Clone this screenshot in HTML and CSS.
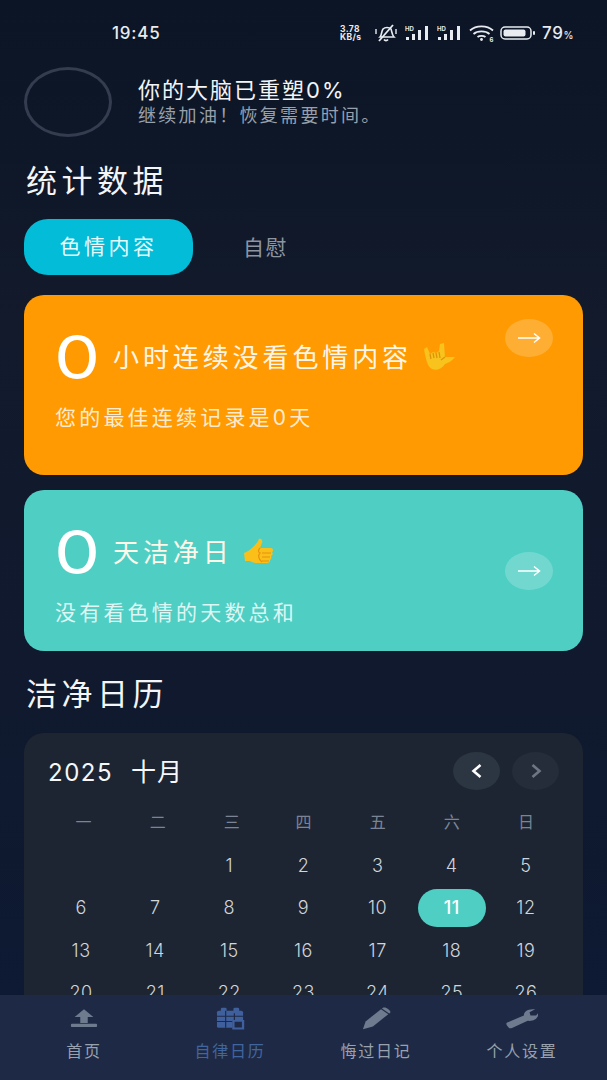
FILE: index.html
```html
<!DOCTYPE html>
<html lang="zh-CN">

<head>
  <meta charset="UTF-8">
  <meta name="viewport" content="width=device-width, initial-scale=1.0">
  <title>统计数据</title>
  <link rel="stylesheet" href="styles.css">
</head>

<body>
  <div class="app">

    <!-- status bar -->
    <div class="status-bar">
      <span class="clock">19:45</span>
      <div class="status-icons">
        <span class="speed">3.78<br>KB/s</span>
        <svg class="bell" width="24" height="20" viewBox="0 0 24 20" fill="none" stroke="#e8ebef" stroke-width="1.6">
          <path d="M6 14c2-2 1-5 3-8 2-2 6-2 8 0 1 3 1 6 3 8z"/>
          <path d="M10 16.5c1 1.500 3 1.500 4 0"/>
          <path d="M5 18L19 2" stroke-width="1.8"/>
          <path d="M2 6v5M22 6v5" stroke-width="1.400"/>
        </svg>
        <svg width="26" height="18" viewBox="0 0 26 18" fill="#e8ebef">
          <text x="0" y="6.500" class="hd">HD</text>
          <rect x="1" y="13" width="3" height="3"/><rect x="7" y="10" width="3" height="6"/><rect x="13" y="6" width="3" height="10"/><rect x="20" y="2" width="3" height="14"/>
        </svg>
        <svg width="26" height="18" viewBox="0 0 26 18" fill="#e8ebef">
          <text x="0" y="6.500" class="hd">HD</text>
          <rect x="1" y="13" width="3" height="3"/><rect x="7" y="10" width="3" height="6"/><rect x="13" y="6" width="3" height="10"/><rect x="20" y="2" width="3" height="14"/>
        </svg>
        <svg width="25" height="18" viewBox="0 0 25 18" fill="none" stroke="#e8ebef" stroke-width="1.800">
          <path d="M1 6.500c6-5.500 17-5.500 23 0"/>
          <path d="M4.500 10c4-3.500 12-3.500 16 0"/>
          <path d="M8.500 13c2-1.500 6-1.500 8 0"/>
          <circle cx="12.500" cy="15.500" r="1.400" fill="#e8ebef" stroke="none"/>
          <text x="20.500" y="17.500" class="wifi-six" fill="#e8ebef" stroke="none">6</text>
        </svg>
        <svg width="36" height="16" viewBox="0 0 36 16" fill="none">
          <rect x="1" y="2" width="30" height="12" rx="4" stroke="#e8ebef" stroke-width="1.500"/>
          <rect x="3.500" y="4.500" width="22" height="7" rx="2" fill="#e8ebef"/>
          <rect x="33" y="6" width="2" height="4" rx="1" fill="#e8ebef"/>
        </svg>
        <span class="battery">79<small>%</small></span>
      </div>
    </div>

    <!-- brain progress -->
    <div class="brain-row">
      <div class="ring"></div>
      <div class="brain-text">
        <div class="brain-title">你的大脑已重塑0%</div>
        <div class="brain-sub">继续加油！恢复需要时间。</div>
      </div>
    </div>

    <h2 class="section-title">统计数据</h2>

    <div class="tabs">
      <div class="tab active">色情内容</div>
      <div class="tab">自慰</div>
    </div>

    <div class="card orange">
      <div class="card-body">
        <div class="card-main">
          <span class="big-num">0</span>
          <span class="card-title">小时连续没看色情内容</span>
          <svg class="emoji" width="34" height="28" viewBox="0 0 34 28">
            <path d="M2 6L5 4 8 11 11 9 14 10 17 8 18 1 22 0 23 14 33 14C30 18 26 20 23 21 20 26 14 28 10 26 6 24 4 18 2 6z" fill="#f7c31c"/>
            <path d="M8 11l1 5M11 10l1 5M14 10l1 5M17 9l1 6M23 14l-4 3" stroke="#e0930a" stroke-width="1.300" fill="none"/>
          </svg>
        </div>
        <div class="card-sub">您的最佳连续记录是0天</div>
      </div>
      <div class="arrow-btn top">
        <svg width="24" height="12" viewBox="0 0 24 12" fill="none" stroke="#fff" stroke-width="1.500"><path d="M1 6h21M17 1.500L22.500 6 17 10.500"/></svg>
      </div>
    </div>

    <div class="card teal">
      <div class="card-body">
        <div class="card-main">
          <span class="big-num">0</span>
          <span class="card-title">天洁净日</span>
          <svg class="emoji" width="32" height="28" viewBox="0 0 32 28">
            <path d="M1 15c3-1 6-3 9-6 3-3 5-5 6-8 2-1 4 1 3 4l-2 5h11c2 0 3 3 1 4 1 2 1 3-1 4 1 2 0 3-1 4 0 2-1 3-3 3H14c-3 0-5-1-7-2l-5 0z" fill="#fbbf1a"/>
            <path d="M19 15h9M19 19h8M19 23h7M17 10c-2 2-2 4 0 5 -2 2-2 6 2 9" stroke="#e8930c" stroke-width="1.200" fill="none"/>
          </svg>
        </div>
        <div class="card-sub">没有看色情的天数总和</div>
      </div>
      <div class="arrow-btn">
        <svg width="24" height="12" viewBox="0 0 24 12" fill="none" stroke="#fff" stroke-width="1.500"><path d="M1 6h21M17 1.500L22.500 6 17 10.500"/></svg>
      </div>
    </div>

    <h2 class="section-title calendar-title">洁净日历</h2>

    <div class="calendar">
      <div class="cal-head">
        <div class="cal-month">2025<span>十月</span></div>
        <div class="cal-nav">
          <div class="nav-btn prev">
            <svg width="14" height="16" viewBox="0 0 14 16" fill="none" stroke="#fff" stroke-width="2.600"><path d="M10.500 2L3.500 8l7 6"/></svg>
          </div>
          <div class="nav-btn next">
            <svg width="14" height="16" viewBox="0 0 14 16" fill="none" stroke="#6d7684" stroke-width="2.600"><path d="M3.500 2l7 6-7 6"/></svg>
          </div>
        </div>
      </div>
      <div class="week-row">
        <span>一</span><span>二</span><span>三</span><span>四</span><span>五</span><span>六</span><span>日</span>
      </div>
      <div class="days">
        <span></span><span></span><span>1</span><span>2</span><span>3</span><span>4</span><span>5</span>
        <span>6</span><span>7</span><span>8</span><span>9</span><span>10</span><span class="today">11</span><span>12</span>
        <span>13</span><span>14</span><span>15</span><span>16</span><span>17</span><span>18</span><span>19</span>
        <span>20</span><span>21</span><span>22</span><span>23</span><span>24</span><span>25</span><span>26</span>
      </div>
    </div>

    <!-- bottom nav sits over the calendar -->
    <div class="bottom-nav">
      <div class="nav-item">
        <svg width="28" height="23" viewBox="0 0 30 30" preserveAspectRatio="none" fill="#6e7b8e">
          <path d="M15 3L25 13h-6v8h-8v-8H5z"/>
          <rect x="1" y="22" width="28" height="4" rx="1"/>
        </svg>
        <span>首页</span>
      </div>
      <div class="nav-item current">
        <svg width="29" height="23" viewBox="0 0 30 30" preserveAspectRatio="none" fill="#3f5f9d">
          <rect x="1" y="5" width="27" height="22" rx="2"/>
          <rect x="5" y="1" width="6" height="7" rx="1.500"/>
          <rect x="18" y="1" width="6" height="7" rx="1.500"/>
          <path d="M1 12h27M1 19h18M10 5v22M19 8v11" stroke="#1e2a45" stroke-width="1.200"/>
          <rect x="17" y="17" width="12" height="12" fill="#1e2a45"/>
          <path d="M18 18h10v10H18z" fill="none" stroke="#3f5f9d" stroke-width="2.400"/>
        </svg>
        <span>自律日历</span>
      </div>
      <div class="nav-item">
        <svg width="29" height="23" viewBox="0 0 32 32" preserveAspectRatio="none" fill="#6e7b8e">
          <path d="M1 31l3-11L21 3l8 7L12 27z"/>
          <path d="M23 1c2-1 4 0 6 2s3 4 2 5l-1 1-8-7z"/>
        </svg>
        <span>悔过日记</span>
      </div>
      <div class="nav-item">
        <svg width="32" height="23" viewBox="0 0 34 30" preserveAspectRatio="none" fill="#6e7b8e">
          <path d="M2 20l17-9c0-5 4-9 12-8l-6 4 1 4 6 0 2-3c1 7-5 11-11 10L7 27c-2 1-3 1-4 0l-2-3c-1-2-1-3 1-4z"/>
        </svg>
        <span>个人设置</span>
      </div>
    </div>

  </div>
</body>

</html>
```

FILE: styles.css
```css
body {
  margin: 0;
  padding: 0;
  font-family: Inter, "Noto Sans CJK SC", sans-serif;
  background-color: #0c1628;
  color: #fff;
}

.app {
  position: relative;
  width: 607px;
  height: 1080px;
  padding: 0 24px;
  box-sizing: border-box;
  overflow: hidden;
  background: linear-gradient(180deg, #0b1525 0%, #121a2c 30%, #10192e 65%, #0c1a34 100%);
}

/* status bar */
.status-bar {
  display: flex;
  align-items: center;
  height: 66px;
  padding-left: 88px;
  justify-content: space-between;
  padding-right: 9px;
}

.clock {
  font-size: 17px;
  font-weight: 500;
  letter-spacing: 0.8px;
  color: #e8ebef;
}

.status-icons {
  display: flex;
  align-items: center;
  gap: 6px;
}

.speed {
  font-size: 8.500px;
  font-weight: 700;
  line-height: 8.500px;
  width: 28px;
  letter-spacing: 0.4px;
  color: #e8ebef;
}

.bell {
  margin-right: 1px;
}

.hd {
  font-size: 6px;
  font-weight: 700;
}

.wifi-six {
  font-size: 6px;
  font-weight: 700;
}

.battery {
  font-size: 17px;
  font-weight: 500;
  letter-spacing: 0.6px;
  color: #e8ebef;
}

.battery small {
  font-size: 10px;
}

/* brain row */
.brain-row {
  display: flex;
  align-items: center;
  height: 70px;
  margin-top: 1px;
}

.ring {
  width: 88px;
  height: 70px;
  border: 3px solid #333d4f;
  border-radius: 50%;
  box-sizing: border-box;
  flex-shrink: 0;
}

.brain-text {
  margin-left: 26px;
}

.brain-title {
  font-size: 22px;
  line-height: 28px;
  letter-spacing: 2px;
  color: #f2f4f6;
}

.brain-sub {
  font-size: 18px;
  line-height: 24px;
  letter-spacing: 2.300px;
  color: #98a0ab;
}

.section-title {
  margin: 24px 0 0 2px;
  height: 40px;
  line-height: 40px;
  font-size: 31px;
  font-weight: 400;
  letter-spacing: 4.500px;
  color: #f4f5f7;
}

.calendar-title {
  margin-top: 23px;
}

/* tabs */
.tabs {
  display: flex;
  align-items: center;
  margin-top: 18px;
}

.tab {
  font-size: 21px;
  letter-spacing: 1.500px;
  color: #8d95a1;
  margin-left: 50px;
  padding-bottom: 2px;
}

.tab.active {
  width: 169px;
  height: 56px;
  margin-left: 0;
  padding-bottom: 0;
  line-height: 56px;
  text-align: center;
  background-color: #02bcd8;
  border-radius: 24px;
  color: #e6fbfd;
  letter-spacing: 3.500px;
}

/* cards */
.card {
  display: flex;
  justify-content: space-between;
  margin-top: 15px;
  height: 161px;
  padding: 0 30px 0 32px;
  border-radius: 20px;
  box-sizing: border-box;
}

.card.orange {
  margin-top: 20px;
  height: 180px;
  background-color: #ff9a02;
}

.card.teal {
  background-color: #4fcfc4;
}

.card-body {
  padding-top: 32px;
}

.card-main {
  display: flex;
  align-items: center;
  height: 60px;
}

.big-num {
  font-size: 61px;
  font-weight: 400;
  line-height: 60px;
  width: 59px;
  margin-left: -2px;
  color: #fff;
  transform: scaleX(1.200);
  transform-origin: left center;
}

.card-title {
  font-size: 26px;
  letter-spacing: 3.900px;
  padding-bottom: 3px;
  color: #fff6e8;
  white-space: nowrap;
}

.emoji {
  margin-left: 10px;
  flex-shrink: 0;
}

.card-sub {
  margin-top: 18px;
  height: 26px;
  line-height: 26px;
  font-size: 21px;
  letter-spacing: 3.200px;
  margin-left: -1px;
  color: rgba(255, 255, 255, 0.82);
  white-space: nowrap;
}

.arrow-btn {
  align-self: center;
  display: flex;
  align-items: center;
  justify-content: center;
  width: 48px;
  height: 38px;
  border-radius: 50%;
  background-color: rgba(255, 255, 255, 0.2);
  flex-shrink: 0;
}

.arrow-btn.top {
  align-self: flex-start;
  margin-top: 24px;
}

/* calendar */
.calendar {
  margin-top: 19px;
  padding: 19px 20px 40px;
  background-color: #1d2533;
  border-radius: 20px;
}

.cal-head {
  display: flex;
  justify-content: space-between;
  align-items: center;
  height: 38px;
  padding-left: 4px;
}

.cal-month {
  font-size: 24px;
  letter-spacing: 1.500px;
  padding-bottom: 2px;
  color: #f6f7f8;
}

.cal-month span {
  margin-left: 18px;
  font-size: 25px;
  letter-spacing: 1px;
}

.cal-nav {
  display: flex;
  gap: 12px;
  padding-right: 4px;
}

.nav-btn {
  display: flex;
  align-items: center;
  justify-content: center;
  width: 47px;
  height: 38px;
  border-radius: 50%;
}

.nav-btn.prev {
  background-color: #2c3542;
}

.nav-btn.next {
  background-color: #252d3a;
}

.week-row {
  display: grid;
  grid-template-columns: repeat(7, 1fr);
  margin-top: 20px;
  height: 24px;
  line-height: 24px;
  font-size: 16px;
  text-align: center;
  color: #7a8494;
}

.week-row span:nth-child(-n+3) {
  padding-left: 5px;
}

.days {
  display: grid;
  grid-template-columns: repeat(7, 1fr);
  grid-auto-rows: 42.500px;
  margin-top: 10px;
  font-size: 18px;
  font-weight: 300;
  letter-spacing: 0.5px;
  text-align: center;
  color: #d0d5db;
}

.days span {
  display: flex;
  align-items: center;
  justify-content: center;
}

.days .today {
  width: 68px;
  height: 38px;
  margin: auto;
  background-color: #4fcfc4;
  border-radius: 19px;
  color: #fff;
  font-weight: 500;
}

/* bottom nav */
.bottom-nav {
  position: absolute;
  left: 0;
  right: 0;
  bottom: 0;
  height: 85px;
  display: grid;
  grid-template-columns: repeat(4, 146px);
  padding: 0 11px;
  background-color: #1e2a45;
}

.nav-item {
  display: flex;
  flex-direction: column;
  align-items: center;
  font-size: 16px;
  letter-spacing: 1.800px;
  color: #98a1ae;
}

.nav-item svg {
  margin-top: 12px;
}

.nav-item span {
  margin-top: 9px;
  line-height: 24px;
}

.nav-item.current {
  color: #41659f;
}
```
